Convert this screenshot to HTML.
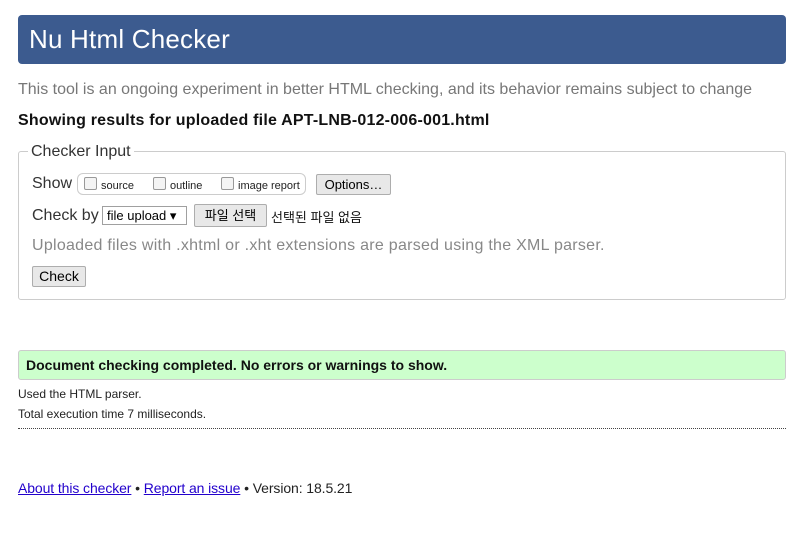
<!DOCTYPE html>
<html><head><meta charset="utf-8"><style>
body{margin:0;width:803px;height:559px;background:#fff;font-family:"Liberation Sans","Noto Sans CJK KR",sans-serif;position:relative;overflow:hidden}
.a{position:absolute;white-space:nowrap}
.btn{position:absolute;background:#e8e8e8;border:1px solid #adadad;border-radius:2px;font-size:13px;box-sizing:border-box;text-align:center;color:#000}
.cb{display:inline-block;width:11px;height:11px;border:1px solid #999;border-radius:2px;background:#f4f4f4;vertical-align:-1px;margin-right:4px}
</style></head><body>
<div class="a" style="left:18px;top:15px;width:768px;height:49px;background:#3c5b8f;border-radius:4px"></div>
<div class="a" style="left:29px;top:24px;font-size:26px;color:#fff;letter-spacing:0.2px">Nu Html Checker</div>
<div class="a" style="left:18px;top:81px;font-size:16px;color:#777">This tool is an ongoing experiment in better HTML checking, and its behavior remains subject to change</div>
<div class="a" style="left:18px;top:112px;font-size:16px;font-weight:bold;color:#111;letter-spacing:0.2px">Showing results for uploaded file APT-LNB-012-006-001.html</div>
<div class="a" style="left:18px;top:151px;width:766px;height:147px;border:1px solid #ccc;border-radius:3px"></div>
<div class="a" style="left:28px;top:143px;padding:0 3px;background:#fff;font-size:16px;color:#333">Checker Input</div>
<div class="a" style="left:32px;top:175px;font-size:16px;color:#333">Show</div>
<div class="a" style="left:77px;top:173px;width:227px;height:20px;border:1px solid #ccc;border-radius:6px"></div>
<div class="a" style="left:84px;top:177px;font-size:11px;color:#222"><span class="cb"></span>source</div>
<div class="a" style="left:153px;top:177px;font-size:11px;color:#222"><span class="cb"></span>outline</div>
<div class="a" style="left:221px;top:177px;font-size:11px;color:#222"><span class="cb"></span>image report</div>
<div class="btn" style="left:316px;top:174px;width:75px;height:21px;line-height:19px">Options…</div>
<div class="a" style="left:32px;top:207px;font-size:16px;color:#333">Check by</div>
<div class="a" style="left:102px;top:206px;width:85px;height:19px;border:1px solid #a0a0a0;box-sizing:border-box;font-size:13px;line-height:17px;padding-left:4px">file upload ▾</div>
<div class="btn" style="left:194px;top:204px;width:73px;height:23px;line-height:21px">파일 선택</div>
<div class="a" style="left:271px;top:207px;font-size:13px;color:#111">선택된 파일 없음</div>
<div class="a" style="left:32px;top:237px;font-size:16px;color:#888;letter-spacing:0.27px">Uploaded files with .xhtml or .xht extensions are parsed using the XML parser.</div>
<div class="btn" style="left:32px;top:266px;width:54px;height:21px;line-height:19px;font-size:14px">Check</div>
<div class="a" style="left:18px;top:350px;width:766px;height:28px;background:#ccffcc;border:1px solid #ccc;border-radius:3px"></div>
<div class="a" style="left:26px;top:357px;font-size:14px;font-weight:bold;color:#111">Document checking completed. No errors or warnings to show.</div>
<div class="a" style="left:18px;top:387px;font-size:12px;color:#222">Used the HTML parser.</div>
<div class="a" style="left:18px;top:407px;font-size:12px;color:#222">Total execution time 7 milliseconds.</div>
<div class="a" style="left:18px;top:428px;width:768px;border-top:1px dotted #444"></div>
<div class="a" style="left:18px;top:480px;font-size:14px;color:#222;letter-spacing:-0.1px"><span style="color:#2200cc;text-decoration:underline">About this checker</span> • <span style="color:#2200cc;text-decoration:underline">Report an issue</span> • Version: 18.5.21</div>
</body></html>
